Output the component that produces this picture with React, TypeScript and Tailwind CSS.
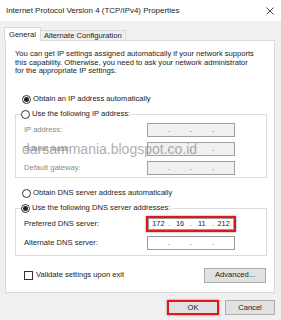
import React from "react";

function Radio({ checked }: { checked?: boolean }) {
  return (
    <span className="w-[9px] h-[9px] rounded-full border border-[#333] bg-white flex items-center justify-center shrink-0">
      {checked && <span className="w-[5px] h-[5px] rounded-full bg-[#222]" />}
    </span>
  );
}

function Octets({ values }: { values: string[] }) {
  return (
    <>
      {values.map((s, i) => (
        <React.Fragment key={i}>
          <span className="flex-1 text-center">{s}</span>
          {i < 3 && <span className="w-[3px] text-center text-[#444]">.</span>}
        </React.Fragment>
      ))}
    </>
  );
}

function IpBox({ disabled }: { disabled?: boolean }) {
  return (
    <div
      className={`w-[88px] h-[14px] border ${disabled ? "border-[#a0a0a0] bg-[#f0f0f0]" : "border-[#9a9a9a] bg-white"} flex items-center text-[7.4px] text-[#222]`}
    >
      <Octets values={["", "", "", ""]} />
    </div>
  );
}

function Row({ label, children, muted }: { label: string; children: React.ReactNode; muted?: boolean }) {
  return (
    <div className="flex items-center justify-between pl-[8px] pr-[31px]">
      <span className={muted ? "text-[#8a8a8a]" : "text-[#222]"}>{label}</span>
      {children}
    </div>
  );
}

export default function App() {
  return (
    <div
      className="relative w-[281px] h-[320px] bg-[#f0f0f0] overflow-hidden text-[7.6px] leading-[8px] text-[#1a1a1a]"
      style={{ fontFamily: '"Liberation Sans", Arial, sans-serif' }}
    >
      {/* Title bar */}
      <div className="h-[21px] bg-white flex items-center justify-between pl-[6px] pr-[6px]">
        <span className="text-[7.95px] text-[#222]">Internet Protocol Version 4 (TCP/IPv4) Properties</span>
        <svg width="8" height="8" viewBox="0 0 8 8" className="mr-[1px]">
          <path d="M0.5 0.5 L7.5 7.5 M7.5 0.5 L0.5 7.5" stroke="#333" strokeWidth="0.9" />
        </svg>
      </div>

      {/* Tabs */}
      <div className="flex items-end pl-[4px] mt-[6px] h-[13px]">
        <div className="h-[14px] w-[37px] bg-white border border-b-0 border-[#d9d9d9] flex items-center justify-center relative z-10 -mb-[1px]">
          General
        </div>
        <div className="h-[10px] px-[3px] bg-[#f0f0f0] border border-l-0 border-b-0 border-[#d9d9d9] flex items-center">
          Alternate Configuration
        </div>
      </div>

      {/* Panel */}
      <div className="ml-[5px] w-[270px] h-[253px] bg-white border border-[#d9d9d9] pt-[9px] px-[9px] flex flex-col">
        <p className="leading-[8.5px] text-[#222] whitespace-nowrap">
          You can get IP settings assigned automatically if your network supports
          <br />
          this capability. Otherwise, you need to ask your network administrator
          <br />
          for the appropriate IP settings.
        </p>

        <div className="flex items-center gap-[2px] mt-[19px] ml-[7px]">
          <Radio checked />
          <span>Obtain an IP address automatically</span>
        </div>

        {/* IP group */}
        <div className="mt-[10px] border border-[#dcdcdc] w-[252px] h-[64px] relative">
          <div className="absolute -top-[5px] left-[5px] bg-white pr-[1px] flex items-center gap-[2px]">
            <Radio />
            <span>Use the following IP address:</span>
          </div>
          <div className="flex flex-col gap-[5px] pt-[8px]">
            <Row label="IP address:" muted>
              <IpBox disabled />
            </Row>
            <Row label="Subnet mask:" muted>
              <IpBox disabled />
            </Row>
            <Row label="Default gateway:" muted>
              <IpBox disabled />
            </Row>
          </div>
        </div>

        <div className="flex items-center gap-[2px] mt-[11px] ml-[7px]">
          <Radio />
          <span>Obtain DNS server address automatically</span>
        </div>

        {/* DNS group */}
        <div className="mt-[10px] border border-[#dcdcdc] w-[252px] h-[48px] relative">
          <div className="absolute -top-[5px] left-[5px] bg-white pr-[1px] flex items-center gap-[2px]">
            <Radio checked />
            <span>Use the following DNS server addresses:</span>
          </div>
          <div className="flex flex-col gap-[5px] pt-[8px]">
            <Row label="Preferred DNS server:">
              <div className="-my-[1px] -mr-[1px] w-[90px] h-[16px] border-2 border-[#e3161c] shadow-[0_0_2px_rgba(0,0,0,0.45)] flex">
                <div className="flex-1 border border-[#9a9a9a] bg-white flex items-center text-[7.4px] text-[#222]">
                  <Octets values={["172", "16", "11", "212"]} />
                </div>
              </div>
            </Row>
            <Row label="Alternate DNS server:">
              <IpBox />
            </Row>
          </div>
        </div>

        <div className="flex items-center justify-between mt-[12px] pl-[9px]">
          <div className="flex items-center gap-[3px]">
            <span className="w-[9px] h-[9px] border border-[#333] bg-white" />
            <span>Validate settings upon exit</span>
          </div>
          <button className="w-[62px] h-[15px] bg-[#e1e1e1] border border-[#adadad] text-[7.6px] text-[#222] mr-[-1px]">
            Advanced...
          </button>
        </div>
      </div>

      {/* Footer buttons */}
      <div className="flex justify-end gap-[6px] pr-[6px] mt-[7px]">
        <button className="w-[52px] h-[15px] bg-[#e1e1e1] border-2 border-[#e3161c] text-[7.6px] text-[#222] shadow-[0_0_2px_rgba(0,0,0,0.5)]">
          OK
        </button>
        <button className="w-[50px] h-[15px] bg-[#e1e1e1] border border-[#adadad] text-[7.6px] text-[#222]">
          Cancel
        </button>
      </div>

      {/* Watermark */}
      <div
        className="absolute left-[22px] top-[140px] text-[14px] leading-[18px] text-[#7a7a7a] opacity-60"
        style={{ fontFamily: '"Liberation Sans", Arial, sans-serif' }}
      >
        darsammania.blogspot.co.id
      </div>
    </div>
  );
}
